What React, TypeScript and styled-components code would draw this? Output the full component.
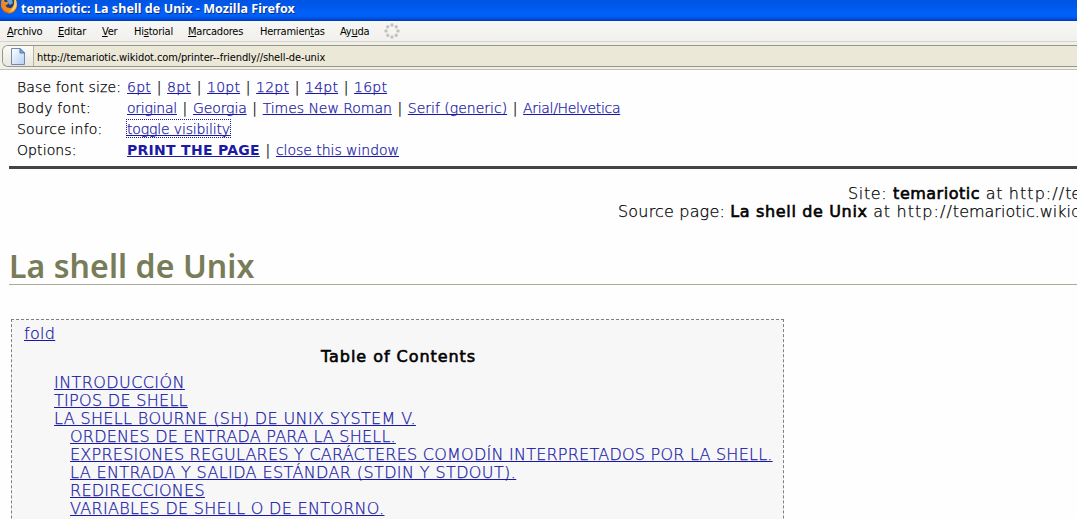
import { Fragment } from "react"
import { createGlobalStyle, styled } from "styled-components"

const GlobalStyle = createGlobalStyle`
  html, body {
    margin: 0;
    background-color: #fefefe;
    overflow: hidden;
  }
`

const Window = styled.div`
  width: 100vw;
  height: 100vh;
  overflow: hidden;
  color: #000;
  font-family: "DejaVu Sans", Verdana, sans-serif;
  white-space: nowrap;
`

const TitleBar = styled.div`
  height: 21px;
  box-sizing: border-box;
  display: flex;
  align-items: flex-start;
  background: linear-gradient(#0054e0 0, #0058ec 6px, #0062fb 14px, #005cf2 17px, #0042c8 20px, #0038a8 21px);
`

const TitleIcon = styled.svg`
  display: block;
  flex: none;
  width: 18px;
  height: 16px;
`

const TitleText = styled.span`
  margin-left: 3px;
  color: #fff;
  font-family: "Noto Sans", sans-serif;
  font-size: 12.5px;
  font-weight: 700;
  line-height: 17px;
  letter-spacing: 0.07px;
  text-shadow: 1px 1px 0 #0a2f8a;
`

const MenuBar = styled.div`
  height: 20px;
  display: flex;
  padding-left: 7px;
  background: linear-gradient(#f7f7f5, #f1f0eb);
  border-bottom: 1px solid #d6d4ca;
`

const MenuItem = styled.span<{ $width: number }>`
  width: ${(p) => p.$width}px;
  font-family: "DejaVu Sans Condensed", "DejaVu Sans", sans-serif;
  font-stretch: condensed;
  font-size: 11px;
  line-height: 21px;
  letter-spacing: -0.22px;

  u {
    text-underline-offset: 1px;
  }
`

const Throbber = styled.svg`
  width: 16px;
  height: 16px;
  margin: 2px 0 0 -2px;
`

const LocationBar = styled.div`
  height: 28px;
  box-sizing: border-box;
  padding: 3px 0 2px 2px;
  background-color: #f0efe8;
  border-bottom: 1px solid #c2c0b5;
`

const AddressField = styled.div`
  height: 22px;
  box-sizing: border-box;
  display: flex;
  border: 1px solid #96958d;
  border-right: 0;
  border-radius: 6px 0 0 6px;
  background-color: #ebe8d8;
  overflow: hidden;
`

const PageButton = styled.div`
  width: 30px;
  display: flex;
  align-items: center;
  justify-content: center;
  background: linear-gradient(#fbfbf8, #e9e7dc);
  border-right: 1px solid #b5b3a7;
`

const Address = styled.span`
  margin-left: 3px;
  font-family: "DejaVu Sans Condensed", "DejaVu Sans", sans-serif;
  font-stretch: condensed;
  font-size: 11px;
  line-height: 23px;
  letter-spacing: -0.11px;
`

const Page = styled.main`
  padding: 7px 0 0 9px;
  font-weight: 200;
  -webkit-text-stroke-width: 0.25px;
`

const Options = styled.div`
  padding: 0 0 5px 8px;
  border-bottom: 3px solid #444;
`

const OptionRow = styled.div`
  display: grid;
  grid-template-columns: 110px auto;
  height: 21px;
  font-size: 14px;
  line-height: 20px;
`

const OptionLabel = styled.span<{ $spacing: number }>`
  letter-spacing: ${(p) => p.$spacing}px;
`

const OptionLinks = styled.div`
  display: flex;
`

const Link = styled.a<{ $spacing?: number; $bold?: boolean; $focused?: boolean }>`
  color: #1a1aa6;
  font-weight: ${(p) => (p.$bold ? 700 : "inherit")};
  -webkit-text-stroke-width: ${(p) => (p.$bold ? "0" : "inherit")};
  letter-spacing: ${(p) => p.$spacing ?? 0}px;
  text-decoration: underline;
  text-decoration-thickness: 1px;
  text-underline-offset: 1px;
  text-decoration-skip-ink: none;
  height: ${(p) => (p.$focused ? "17px" : "auto")};
  margin-top: ${(p) => (p.$focused ? "1px" : "0")};
  line-height: ${(p) => (p.$focused ? "18px" : "inherit")};
  outline: ${(p) => (p.$focused ? "1px dotted #1a1aa6" : "none")};
`

const Separator = styled.span`
  width: 16px;
  text-align: center;
`

const SourceInfo = styled.div`
  width: 1400px;
  padding-top: 16px;
  font-size: 16px;
  line-height: 18px;
`

const SourceLine = styled.div<{ $indent: number }>`
  padding-left: ${(p) => p.$indent}px;
`

const Run = styled.span<{ $spacing: number }>`
  letter-spacing: ${(p) => p.$spacing}px;
`

const Strong = styled.b<{ $spacing: number }>`
  font-weight: 400;
  letter-spacing: ${(p) => p.$spacing}px;
  -webkit-text-stroke-width: 0.6px;
`

const Heading = styled.h1`
  margin: 26px 0 0;
  height: 37px;
  color: #787c58;
  font-family: "Noto Sans", sans-serif;
  font-size: 32px;
  font-weight: 600;
  line-height: 37px;
  letter-spacing: 0.08px;
  border-bottom: 1px solid #a9ab98;
  -webkit-text-stroke-width: 0;
`

const Toc = styled.nav`
  width: 773px;
  height: 260px;
  box-sizing: border-box;
  margin: 34px 0 0 2px;
  padding: 5px 0 0 12px;
  background-color: #f7f7f7;
  border: 1px dashed #808080;
  font-size: 16px;
  line-height: 18px;
`

const TocTitle = styled.div`
  padding: 5px 0 8px 297px;
`

const TocItem = styled.div<{ $depth: number }>`
  padding-left: ${(p) => 30 + p.$depth * 16}px;
`

const menus = [
  { before: "", key: "A", after: "rchivo", width: 51 },
  { before: "", key: "E", after: "ditar", width: 44 },
  { before: "", key: "V", after: "er", width: 32 },
  { before: "Hi", key: "s", after: "torial", width: 54 },
  { before: "", key: "M", after: "arcadores", width: 72 },
  { before: "Herramien", key: "t", after: "as", width: 80 },
  { before: "Ay", key: "u", after: "da", width: 46 },
]

type OptionLink = { text: string; spacing: number; bold?: boolean; focused?: boolean }

const options: { label: string; spacing: number; links: OptionLink[] }[] = [
  {
    label: "Base font size:",
    spacing: 0.12,
    links: [
      { text: "6pt", spacing: 0.25 },
      { text: "8pt", spacing: 0.25 },
      { text: "10pt", spacing: 0.2 },
      { text: "12pt", spacing: 0.2 },
      { text: "14pt", spacing: 0.2 },
      { text: "16pt", spacing: 0.2 },
    ],
  },
  {
    label: "Body font:",
    spacing: 0.2,
    links: [
      { text: "original", spacing: -0.24 },
      { text: "Georgia", spacing: -0.1 },
      { text: "Times New Roman", spacing: -0.04 },
      { text: "Serif (generic)", spacing: 0 },
      { text: "Arial/Helvetica", spacing: -0.33 },
    ],
  },
  {
    label: "Source info:",
    spacing: 0.15,
    links: [{ text: "toggle visibility", spacing: -0.15, focused: true }],
  },
  {
    label: "Options:",
    spacing: 0.1,
    links: [
      { text: "PRINT THE PAGE", spacing: 0.28, bold: true },
      { text: "close this window", spacing: -0.03 },
    ],
  },
]

const contents = [
  { text: "INTRODUCCIÓN", depth: 0, spacing: 0.42 },
  { text: "TIPOS DE SHELL", depth: 0, spacing: 0.3 },
  { text: "LA SHELL BOURNE (SH) DE UNIX SYSTEM V.", depth: 0, spacing: 0.37 },
  { text: "ORDENES DE ENTRADA PARA LA SHELL.", depth: 1, spacing: 0.21 },
  { text: "EXPRESIONES REGULARES Y CARÁCTERES COMODÍN INTERPRETADOS POR LA SHELL.", depth: 1, spacing: 0.24 },
  { text: "LA ENTRADA Y SALIDA ESTÁNDAR (STDIN Y STDOUT).", depth: 1, spacing: 0.39 },
  { text: "REDIRECCIONES", depth: 1, spacing: 0.27 },
  { text: "VARIABLES DE SHELL O DE ENTORNO.", depth: 1, spacing: 0.3 },
]

function FirefoxIcon() {
  return (
    <TitleIcon viewBox="0 0 18 16">
      <circle cx="9" cy="5.5" r="8" fill="#c9541a" />
      <circle cx="8.5" cy="3.5" r="6" fill="#1f3f7c" />
      <path d="M7 0H12L13 3L10 5L8 3Z" fill="#6aa5d6" />
      <path d="M1.5 0H4L5 2H8.5L8 4L5.5 5.5Q7 8.5 11 8Q14.5 6.5 14 0H16Q18.5 7 14 11.5Q9 15 4 11.5Q0 7.5 1.5 0Z" fill="#ee8a24" />
      <path d="M14.5 0H16Q17.5 5 15.5 8.5Q13 12 9 11.5Q14.5 9 14.5 0Z" fill="#fbd35c" />
      <path d="M1.5 7Q4 11.5 9 12.5Q5 14 2.5 10Z" fill="#c9541a" />
    </TitleIcon>
  )
}

function PageIcon() {
  return (
    <svg width="14" height="17" viewBox="0 0 14 17">
      <defs>
        <linearGradient id="sheet" x1="0" y1="0" x2="1" y2="1">
          <stop offset="0" stopColor="#fff" />
          <stop offset="1" stopColor="#b5d0f4" />
        </linearGradient>
      </defs>
      <path d="M0.5 0.5H9L13.5 5V16.5H0.5Z" fill="url(#sheet)" stroke="#7288b4" />
      <path d="M9 0.5V5H13.5Z" fill="#7ea6e4" stroke="#5877b4" />
    </svg>
  )
}

function LoadingIcon() {
  return (
    <Throbber viewBox="-8 -8 16 16">
      {[0, 45, 90, 135, 180, 225, 270, 315].map((angle) => (
        <circle key={angle} cy="-6" r="1.7" fill="#c4c3bf" transform={`rotate(${angle})`} />
      ))}
    </Throbber>
  )
}

export default function App() {
  return (
    <Window>
      <GlobalStyle />
      <TitleBar>
        <FirefoxIcon />
        <TitleText>temariotic: La shell de Unix - Mozilla Firefox</TitleText>
      </TitleBar>
      <MenuBar>
        {menus.map((menu) => (
          <MenuItem key={menu.key} $width={menu.width}>
            {menu.before}
            <u>{menu.key}</u>
            {menu.after}
          </MenuItem>
        ))}
        <LoadingIcon />
      </MenuBar>
      <LocationBar>
        <AddressField>
          <PageButton>
            <PageIcon />
          </PageButton>
          <Address>http://temariotic.wikidot.com/printer--friendly//shell-de-unix</Address>
        </AddressField>
      </LocationBar>
      <Page>
        <Options>
          {options.map((row) => (
            <OptionRow key={row.label}>
              <OptionLabel $spacing={row.spacing}>{row.label}</OptionLabel>
              <OptionLinks>
                {row.links.map((link, i) => (
                  <Fragment key={link.text}>
                    {i > 0 && <Separator>|</Separator>}
                    <Link $spacing={link.spacing} $bold={link.bold} $focused={link.focused}>
                      {link.text}
                    </Link>
                  </Fragment>
                ))}
              </OptionLinks>
            </OptionRow>
          ))}
        </Options>
        <SourceInfo>
          <SourceLine $indent={839}>
            <Run $spacing={0.65}>Site: </Run>
            <Strong $spacing={0.5}>temariotic</Strong>
            <Run $spacing={0.65}> at </Run>
            <Run $spacing={1.05}>http://</Run>
            <Run $spacing={-0.1}>te</Run>
          </SourceLine>
          <SourceLine $indent={609}>
            <Run $spacing={0.18}>Source page: </Run>
            <Strong $spacing={0.65}>La shell de Unix</Strong>
            <Run $spacing={0.65}> at </Run>
            <Run $spacing={1.05}>http://</Run>
            <Run $spacing={0}>temariotic.wikidot.com</Run>
          </SourceLine>
        </SourceInfo>
        <Heading>La shell de Unix</Heading>
        <Toc>
          <Link $spacing={0.3}>fold</Link>
          <TocTitle>
            <Strong $spacing={0.95}>Table of Contents</Strong>
          </TocTitle>
          {contents.map((item) => (
            <TocItem key={item.text} $depth={item.depth}>
              <Link $spacing={item.spacing}>{item.text}</Link>
            </TocItem>
          ))}
        </Toc>
      </Page>
    </Window>
  )
}
